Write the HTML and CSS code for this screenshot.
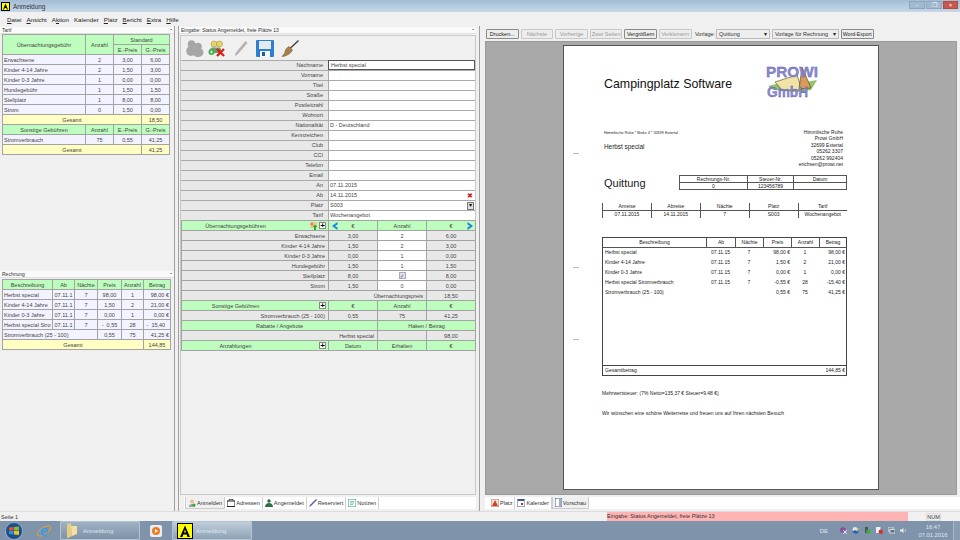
FILE: index.html
```html
<!DOCTYPE html>
<html lang="de">
<head>
<meta charset="UTF-8">
<title>Anmeldung</title>
<link rel="stylesheet" href="styles.css">
</head>
<body>
<div class="window">
  <div class="titlebar">
    <svg class="app-icon" width="9" height="9" viewBox="0 0 9 9"><rect width="9" height="9" fill="#000"/><rect x="1" y="1" width="7" height="7" fill="#ff0"/><path d="M2 7.500 4.500 1.500 7 7.500H5.800L5.300 6H3.700L3.200 7.500Z" fill="#000"/></svg>
    <span class="title-text">Anmeldung</span>
    <div class="win-btns">
      <span class="win-btn">–</span><span class="win-btn">❐</span><span class="win-btn close">×</span>
    </div>
  </div>
  <div class="menubar">
    <span><u>D</u>atei</span><span><u>A</u>nsicht</span><span>A<u>k</u>tion</span><span>Kalender</span><span><u>P</u>latz</span><span><u>B</u>ericht</span><span><u>E</u>xtra</span><span><u>H</u>ilfe</span>
  </div>

  <div class="main">
    <!-- links: Tarif und Rechnung -->
    <div class="col-left">
      <div class="pane-head">Tarif<span class="pin">▪</span></div>
      <table class="grid tarif">
        <colgroup><col class="c1"><col class="c2"><col class="c3"><col class="c4"></colgroup>
        <tr class="head"><td rowspan="2">Übernachtungsgebühr</td><td rowspan="2">Anzahl</td><td colspan="2">Standard</td></tr>
        <tr class="head"><td>E.-Preis</td><td>G.-Preis</td></tr>
        <tr class="row"><td class="l">Erwachsene</td><td>2</td><td>3,00</td><td>6,00</td></tr>
        <tr class="row"><td class="l">Kinder 4-14 Jahre</td><td>2</td><td>1,50</td><td>3,00</td></tr>
        <tr class="row"><td class="l">Kinder 0-3 Jahre</td><td>1</td><td>0,00</td><td>0,00</td></tr>
        <tr class="row"><td class="l">Hundegebühr</td><td>1</td><td>1,50</td><td>1,50</td></tr>
        <tr class="row"><td class="l">Stellplatz</td><td>1</td><td>8,00</td><td>8,00</td></tr>
        <tr class="row"><td class="l">Strom</td><td>0</td><td>1,50</td><td>0,00</td></tr>
        <tr class="sum"><td colspan="3">Gesamt</td><td>18,50</td></tr>
        <tr class="head"><td>Sonstige Gebühren</td><td>Anzahl</td><td>E.-Preis</td><td>G.-Preis</td></tr>
        <tr class="row"><td class="l">Stromverbrauch</td><td>75</td><td>0,55</td><td>41,25</td></tr>
        <tr class="sum"><td colspan="3">Gesamt</td><td>41,25</td></tr>
      </table>
      <div class="pane-head second">Rechnung<span class="pin">▪</span></div>
      <table class="grid rechnung">
        <colgroup><col class="r1"><col class="r2"><col class="r3"><col class="r4"><col class="r5"><col class="r6"></colgroup>
        <tr class="head"><td>Beschreibung</td><td>Ab</td><td>Nächte</td><td>Preis</td><td>Anzahl</td><td>Betrag</td></tr>
        <tr class="row"><td class="l">Herbst special</td><td>07.11.1</td><td>7</td><td>98,00</td><td>1</td><td class="r">98,00 €</td></tr>
        <tr class="row"><td class="l">Kinder 4-14 Jahre</td><td>07.11.1</td><td>7</td><td>1,50</td><td>2</td><td class="r">21,00 €</td></tr>
        <tr class="row"><td class="l">Kinder 0-3 Jahre</td><td>07.11.1</td><td>7</td><td>0,00</td><td>1</td><td class="r">0,00 €</td></tr>
        <tr class="row"><td class="l">Herbst special Stro</td><td>07.11.1</td><td>7</td><td>-&nbsp;&nbsp;0,55</td><td>28</td><td class="l">&nbsp;-&nbsp;&nbsp;15,40</td></tr>
        <tr class="row"><td class="l" colspan="3">Stromverbrauch (25 - 100)</td><td>0,55</td><td>75</td><td class="r">41,25 €</td></tr>
        <tr class="sum"><td colspan="5">Gesamt</td><td>144,85</td></tr>
      </table>
    </div>

    <!-- Mitte: Eingabe -->
    <div class="col-mid">
      <div class="pane-head">Eingabe: Status Angemeldet, freie Plätze 13<span class="pin">▪</span></div>
      <div class="mid-body">
        <div class="toolbar">
          <svg width="18" height="17" viewBox="0 0 18 17"><g fill="#a6a6a6"><circle cx="5.500" cy="4" r="3.800"/><circle cx="12" cy="6.500" r="3.800"/><ellipse cx="5" cy="11" rx="4.800" ry="5"/><ellipse cx="12" cy="12.500" rx="5.500" ry="4.500"/></g></svg>
          <svg width="18" height="17" viewBox="0 0 18 17"><circle cx="6" cy="4" r="3" fill="#e6d36a" stroke="#9a8a30" stroke-width=".5"/><circle cx="11.500" cy="4" r="3" fill="#e6d36a" stroke="#9a8a30" stroke-width=".5"/><path d="M1 13c0-3.500 2-5.500 4-5.500h6c1.500 0 2 1 2 2.500v3z" fill="#6f9a72"/><circle cx="3.500" cy="12" r="3" fill="#3fb04a"/><path d="M2 12h3M3.500 10.500v3" stroke="#fff" stroke-width=".8"/><path d="M9 9l7 7M16 9l-7 7" stroke="#d9201a" stroke-width="2.400"/></svg>
          <svg width="14" height="17" viewBox="0 0 14 17"><path d="M11.500 1 13.500 3 3.500 14.500 1 16l.6-3z" fill="#b2b2b2"/></svg>
          <svg width="18" height="17" viewBox="0 0 18 17"><rect width="18" height="17" rx="1" fill="#2e7fd0"/><rect x="3" y="1" width="12" height="8" fill="#e3eaf2"/><rect x="4" y="11" width="10" height="6" fill="#f4f6f8"/><rect x="6" y="12" width="3" height="4" fill="#1f5c9c"/></svg>
          <svg width="18" height="17" viewBox="0 0 18 17"><path d="M17.500 .5 9 8.500" stroke="#3a3a3a" stroke-width="1.200"/><path d="M8 6.500 11.500 10C10 13.500 5 16.500 1 16.500c2-2 3-3.500 3-5C4.500 9.500 6 7.500 8 6.500z" fill="#a8824a" stroke="#5f4620" stroke-width=".5"/></svg>
        </div>
        <div class="form">
          <div class="f-label">Nachname</div><div class="f-val focus">Herbst special</div>
          <div class="f-label">Vorname</div><div class="f-val"></div>
          <div class="f-label">Titel</div><div class="f-val"></div>
          <div class="f-label">Straße</div><div class="f-val"></div>
          <div class="f-label">Postleitzahl</div><div class="f-val"></div>
          <div class="f-label">Wohnort</div><div class="f-val"></div>
          <div class="f-label">Nationalität</div><div class="f-val">D - Deutschland</div>
          <div class="f-label">Kennzeichen</div><div class="f-val"></div>
          <div class="f-label">Club</div><div class="f-val"></div>
          <div class="f-label">CCI</div><div class="f-val"></div>
          <div class="f-label">Telefon</div><div class="f-val"></div>
          <div class="f-label">Email</div><div class="f-val"></div>
          <div class="f-label">An</div><div class="f-val">07.11.2015</div>
          <div class="f-label">Ab</div><div class="f-val">14.11.2015<span class="x-mark">✖</span></div>
          <div class="f-label">Platz</div><div class="f-val">S003<span class="drop">▾</span></div>
          <div class="f-label">Tarif</div><div class="f-val">Wochenangebot</div>
        </div>
        <table class="grid prices">
          <colgroup><col class="p1"><col class="p2"><col class="p3"><col class="p4"></colgroup>
          <tr class="head"><td class="with-plus">Übernachtungsgebühren<span class="add-ico"><svg width="9" height="9" viewBox="0 0 9 9"><rect x="1" y="1" width="7" height="6" fill="#e9cf8c"/><circle cx="3" cy="3" r="1.500" fill="#e57a7a"/><path d="M5 9V6H3.500L6 3.500 8.500 6H7v3z" fill="#3aa63a"/></svg></span><span class="plus">+</span></td><td class="arrows"><svg class="arr" width="6" height="8" viewBox="0 0 6 8"><path d="M5.500 0 0 4l5.500 4V5.500L3 4l2.500-1.500z" fill="#1d7fe0"/></svg>€</td><td>Anzahl</td><td class="arrows">€<svg class="arr right" width="6" height="8" viewBox="0 0 6 8"><path d="M.5 0 6 4 .5 8V5.500L3 4 .5 2.500z" fill="#1d7fe0"/></svg></td></tr>
          <tr class="gray"><td class="rr">Erwachsene</td><td>3,00</td><td class="w">2</td><td>6,00</td></tr>
          <tr class="gray"><td class="rr">Kinder 4-14 Jahre</td><td>1,50</td><td class="w">2</td><td>3,00</td></tr>
          <tr class="gray"><td class="rr">Kinder 0-3 Jahre</td><td>0,00</td><td class="w">1</td><td>0,00</td></tr>
          <tr class="gray"><td class="rr">Hundegebühr</td><td>1,50</td><td class="w">1</td><td>1,50</td></tr>
          <tr class="gray"><td class="rr">Stellplatz</td><td>8,00</td><td class="w"><span class="check">✓</span></td><td>8,00</td></tr>
          <tr class="gray"><td class="rr">Strom</td><td>1,50</td><td class="w">0</td><td>0,00</td></tr>
          <tr class="gray"><td class="rr" colspan="3">Übernachtungspreis</td><td>18,50</td></tr>
          <tr class="head"><td class="with-plus">Sonstige Gebühren<span class="plus">+</span></td><td>€</td><td>Anzahl</td><td>€</td></tr>
          <tr class="gray"><td class="rr">Stromverbrauch (25 - 100)</td><td>0,55</td><td>75</td><td>41,25</td></tr>
          <tr class="head"><td colspan="2">Rabatte / Angebote</td><td colspan="2">Haken / Betrag</td></tr>
          <tr class="gray"><td class="rr" colspan="2">Herbst special</td><td></td><td>98,00</td></tr>
          <tr class="head"><td class="with-plus">Anzahlungen<span class="plus">+</span></td><td>Datum</td><td>Erhalten</td><td>€</td></tr>
        </table>
      </div>
      <div class="tabs mid-tabs">
        <span class="tab active"><svg width="8" height="8" viewBox="0 0 8 8"><circle cx="4" cy="2.500" r="2" fill="#e8c08a"/><path d="M1 8c0-2 1-3 3-3s3 1 3 3z" fill="#8aa0b8"/><circle cx="6" cy="6" r="1.600" fill="#3aa63a"/></svg>Anmelden</span>
        <span class="tab"><svg width="8" height="8" viewBox="0 0 8 8"><rect y="2" width="8" height="5.500" fill="none" stroke="#222"/><path d="M2 2V.5h4V2" fill="none" stroke="#222" stroke-width=".7"/></svg>Adressen</span>
        <span class="tab"><svg width="8" height="8" viewBox="0 0 8 8"><circle cx="4" cy="2" r="1.700" fill="#2f6b45"/><path d="M0 8c0-2.500 2-4 4-4s4 1.500 4 4z" fill="#2f6b45"/></svg>Angemeldet</span>
        <span class="tab"><svg width="8" height="8" viewBox="0 0 8 8"><path d="M7 0 8 1 2 7 0 8l1-2z" fill="#4a5fa8"/></svg>Reserviert</span>
        <span class="tab"><svg width="8" height="8" viewBox="0 0 8 8"><rect width="8" height="8" rx="1" fill="#fff" stroke="#2a9a8a"/><path d="M2 4h4M2 2.500h4M2 5.500h3" stroke="#2a9a8a" stroke-width=".6"/></svg>Notizen</span>
      </div>
    </div>

    <!-- rechts: Vorschau -->
    <div class="col-right">
      <div class="preview-bar">
        <button class="btn">Drucken...</button>
        <button class="btn off">Nächste</button>
        <button class="btn off">Vorherige</button>
        <button class="btn off">Zwei Seiten</button>
        <button class="btn">Vergrößern</button>
        <button class="btn off">Verkleinern</button>
        <span class="bar-label">Vorlage:</span>
        <span class="combo c-a">Quittung<i>▾</i></span>
        <span class="combo c-b">Vorlage für Rechnung<i>▾</i></span>
        <button class="btn export">Word-Export</button>
      </div>
      <div class="preview">
        <div class="page">
          <i class="fold f1"></i><i class="fold f2"></i><i class="fold f3"></i>
          <div class="doc-top">
            <div class="doc-title">Campingplatz Software</div>
            <svg class="logo" width="54" height="42" viewBox="0 0 54 42">
              <path d="M2 24 14 21H36L51 18 45 28 30 30 8 28z" fill="#8fc46a"/>
              <path d="M9 20 31 13 36 28 16 28z" fill="#efe3a8" stroke="#4a3a20" stroke-width=".6"/>
              <path d="M33 27 36 5 45 26z" fill="#d99a5c" stroke="#4a3a20" stroke-width=".6"/>
              <text x="0" y="15" class="logo-text" textLength="52" lengthAdjust="spacingAndGlyphs">PROWI</text>
              <text x="1" y="35" class="logo-text" textLength="41" lengthAdjust="spacingAndGlyphs">GmbH</text>
            </svg>
          </div>
          <div class="doc-addr">
            <div>
              <div class="sender">Himmlische Ruhe * Binks 4 * 32699 Extertal</div>
              <div class="recipient">Herbst special</div>
            </div>
            <div class="own-addr">Himmlische Ruhe<br>Prowi GmbH<br>32699 Extertal<br>05262 3307<br>05262 992404<br>erichsen@prowi.net</div>
          </div>
          <div class="doc-head">
            <div class="doc-name">Quittung</div>
            <table class="doc-meta">
              <tr><td>Rechnungs-Nr.</td><td>Steuer-Nr.</td><td>Datum</td></tr>
              <tr><td>0</td><td>123456789</td><td></td></tr>
            </table>
          </div>
          <table class="doc-stay">
            <tr><td>Anreise</td><td>Abreise</td><td>Nächte</td><td>Platz</td><td>Tarif</td></tr>
            <tr><td>07.11.2015</td><td>14.11.2015</td><td>7</td><td>S003</td><td>Wochenangebot</td></tr>
          </table>
          <div class="doc-items">
            <div class="it-row it-head"><span class="i1">Beschreibung</span><span class="i2">Ab</span><span class="i3">Nächte</span><span class="i4">Preis</span><span class="i5">Anzahl</span><span class="i6">Betrag</span></div>
            <div class="it-body">
              <div class="it-row"><span class="i1 tl">Herbst special</span><span class="i2">07.11.15</span><span class="i3">7</span><span class="i4 tr">98,00 €</span><span class="i5">1</span><span class="i6 tr">98,00 €</span></div>
              <div class="it-row"><span class="i1 tl">Kinder 4-14 Jahre</span><span class="i2">07.11.15</span><span class="i3">7</span><span class="i4 tr">1,50 €</span><span class="i5">2</span><span class="i6 tr">21,00 €</span></div>
              <div class="it-row"><span class="i1 tl">Kinder 0-3 Jahre</span><span class="i2">07.11.15</span><span class="i3">7</span><span class="i4 tr">0,00 €</span><span class="i5">1</span><span class="i6 tr">0,00 €</span></div>
              <div class="it-row"><span class="i1 tl">Herbst special Stromverbrauch</span><span class="i2">07.11.15</span><span class="i3">7</span><span class="i4 tr">-0,55 €</span><span class="i5">28</span><span class="i6 tr">-15,40 €</span></div>
              <div class="it-row"><span class="i1 tl">Stromverbrauch (25 - 100)</span><span class="i2"></span><span class="i3"></span><span class="i4 tr">0,55 €</span><span class="i5">75</span><span class="i6 tr">41,25 €</span></div>
            </div>
            <div class="it-total"><span>Gesamtbetrag</span><span>144,85 €</span></div>
          </div>
          <div class="doc-note">Mehrwertsteuer: (7% Netto=135,37 € Steuer=9,48 €)</div>
          <div class="doc-note">Wir wünschen eine schöne Weiterreise und freuen uns auf Ihren nächsten Besuch</div>
        </div>
      </div>
      <div class="tabs right-tabs">
        <span class="tab"><svg width="8" height="8" viewBox="0 0 8 8"><rect width="8" height="8" fill="#f4e4dc" stroke="#b03020" stroke-width=".6"/><path d="M1 7 4 1l3 6z" fill="#d04020"/></svg>Platz</span>
        <span class="tab"><svg width="8" height="8" viewBox="0 0 8 8"><rect width="8" height="8" fill="#fff" stroke="#3a5a8a"/><rect x="1" y="0" width="6" height="2" fill="#3a5a8a"/><rect x="4" y="4" width="2" height="2" fill="#d02020"/></svg>Kalender</span>
        <span class="tab active"><svg width="7" height="9" viewBox="0 0 7 9"><rect width="7" height="9" fill="#fff" stroke="#3a5a8a"/><path d="M5 1v7" stroke="#3a5a8a"/></svg>Vorschau</span>
      </div>
    </div>
  </div>

  <div class="statusbar">
    <span class="st-page">Seite 1</span>
    <span class="st-msg">Eingabe: Status Angemeldet, freie Plätze 13</span>
    <span class="st-num">NUM</span>
  </div>
</div>

<div class="taskbar">
  <span class="start"><svg width="18" height="18" viewBox="0 0 18 18"><circle cx="9" cy="9" r="8.500" fill="#1d4f8c" stroke="#b9cfe4" stroke-width=".6"/><path d="M4 5.500 8.500 5V8.500H4z" fill="#e8522a"/><path d="M9 5 14 4.500V8.500H9z" fill="#7cc03a"/><path d="M4 9H8.500V12.500L4 12z" fill="#2f8fe0"/><path d="M9 9h5v4l-5-.5z" fill="#f4c21c"/></svg></span>
  <span class="tb-ico ie"><svg width="16" height="16" viewBox="0 0 16 16"><ellipse cx="8" cy="8" rx="7.500" ry="3.500" transform="rotate(-35 8 8)" fill="none" stroke="#e0a32a" stroke-width="1"/><text x="8" y="12.500" class="ie-e">e</text></svg></span>
  <span class="task folder"><svg width="12" height="15" viewBox="0 0 12 15"><path d="M1 1 5 0 6 13 2 15H1z" fill="#e8cd80"/><path d="M5 3h6v8l-5 2z" fill="#f2e0a2"/></svg>Anmeldung</span>
  <span class="tb-ico media"><svg width="12" height="12" viewBox="0 0 12 12"><rect width="12" height="12" rx="2" fill="#e9eef4"/><circle cx="6" cy="6" r="4" fill="#ee7b1e"/><path d="M5 4l3 2-3 2z" fill="#fff"/></svg></span>
  <span class="task app"><svg width="16" height="16" viewBox="0 0 16 16"><rect width="16" height="16" fill="#000"/><rect x="1" y="1" width="14" height="14" fill="#ff0"/><path d="M3 14 8 2.500 13 14H10.500L9.700 11.500H6.300L5.500 14zM7 9.500h2L8 6.500z" fill="#000" fill-rule="evenodd"/></svg>Anmeldung</span>
  <span class="tray">
    <span class="lang">DE</span>
    <svg width="7" height="7" viewBox="0 0 7 7"><circle cx="3" cy="3" r="2.800" fill="#8a4aa0"/><path d="M3 3l4 4M7 3 3 7" stroke="#e8e8f4" stroke-width="1"/></svg>
    <svg width="7" height="7" viewBox="0 0 7 7"><circle cx="3" cy="2.500" r="2.400" fill="#dfe6ee"/><path d="M0 5l3-2 4 2-3 2z" fill="#2f5fb0"/><circle cx="5.500" cy="2" r="1" fill="#e8c830"/></svg>
    <svg width="7" height="7" viewBox="0 0 7 7"><rect x="1" y="0" width="3" height="6" fill="#4a525c"/><circle cx="4.500" cy="4.500" r="2.300" fill="#3cae3c"/></svg>
    <svg width="7" height="7" viewBox="0 0 7 7"><rect width="4.500" height="6" fill="#eef1f4"/><circle cx="4.800" cy="4.800" r="2.200" fill="#d63030"/></svg>
    <svg width="7" height="7" viewBox="0 0 7 7"><rect width="5" height="4" fill="none" stroke="#e6ebf0" stroke-width=".8"/><rect x="2" y="2.500" width="5" height="3.500" fill="#5c6f84" stroke="#e6ebf0" stroke-width=".8"/></svg>
    <svg width="7" height="7" viewBox="0 0 7 7"><path d="M0 2.500h1.500L3.500 1v5L1.500 4.500H0z" fill="#e6ebf0"/><path d="M5 2c.6 1 .6 2 0 3" fill="none" stroke="#e6ebf0" stroke-width=".6"/></svg>
    <span class="clock">16:47<br>07.01.2016</span>
    <b class="show-desk"></b>
  </span>
</div>
</body>
</html>
```

FILE: styles.css
```css
* {
    box-sizing: border-box;
}

html, body {
    margin: 0;
    padding: 0;
    width: 960px;
    height: 540px;
    overflow: hidden;
}

body {
    font-family: "Liberation Sans", Arial, sans-serif;
    font-size: 5.5px;
    color: #333;
    background-color: #f0f0f0;
}

.window {
    height: 521px;
    display: flex;
    flex-direction: column;
}

/* Titelleiste */
.titlebar {
    height: 12px;
    flex: none;
    display: flex;
    align-items: center;
    padding-left: 1px;
    background: linear-gradient(#a3bcd4, #c6d8e9);
    color: #333;
    font-size: 6.4px;
}

.app-icon {
    margin-right: 3px;
}

.win-btns {
    margin-left: auto;
    margin-right: 2px;
    margin-bottom: 3px;
    display: flex;
    gap: 1px;
}

.win-btn {
    width: 16px;
    height: 8px;
    line-height: 7px;
    text-align: center;
    background-color: #a2b9cf;
    color: #eef;
    font-size: 6px;
    border: 1px solid #8ea6bc;
    overflow: hidden;
}

.win-btn.close {
    width: 15px;
    background-color: #c9554c;
    border-color: #b04a44;
    color: #fff;
}

.menubar {
    height: 14px;
    flex: none;
    display: flex;
    align-items: center;
    gap: 5px;
    padding-left: 7px;
    background-color: #f0f0f0;
    font-size: 6.2px;
    color: #222;
}

/* Drei Spalten */
.main {
    flex: 1;
    min-height: 0;
    display: flex;
    background-color: #f0f0f0;
}

.col-left {
    width: 175px;
    flex: none;
    padding-top: 1px;
    border-right: 1px solid #a0a0a0;
}

.col-mid {
    width: 302px;
    flex: none;
    margin-left: 3px;
    padding-top: 1px;
    padding-bottom: 2px;
    padding-right: 3px;
    border-left: 1px solid #a0a0a0;
    border-right: 1px solid #a0a0a0;
    display: flex;
    flex-direction: column;
}

.col-right {
    width: 476px;
    flex: none;
    margin-left: 4px;
    display: flex;
    flex-direction: column;
    padding-left: 1px;
    padding-top: 3px;
    padding-bottom: 2px;
}

.pane-head {
    height: 7px;
    line-height: 6px;
    padding: 0 2px;
    background-color: #fafafa;
    border-bottom: 1px solid #e0e0e0;
    font-size: 5px;
    display: flex;
    justify-content: space-between;
}

.pin {
    font-size: 4px;
}

.pane-head.second {
    margin-top: 116px;
    margin-bottom: 1px;
}

/* Tabellen */
.grid {
    border-collapse: collapse;
    table-layout: fixed;
    margin-left: 2px;
    background-color: #f0f0f0;
}

.grid td {
    border: 1px solid #a3a3a3;
    height: 10px;
    padding: 0 1px;
    text-align: center;
    overflow: hidden;
    white-space: nowrap;
    font-size: 5.5px;
    color: #444;
}

.tarif { width: 167px; }
.c1 { width: 83px; }
.c2 { width: 28px; }
.c3 { width: 28px; }
.c4 { width: 28px; }

.rechnung { width: 168px; }
.r1 { width: 50px; }
.r2 { width: 22px; }
.r3 { width: 23px; }
.r4 { width: 24px; }
.r5 { width: 22px; }
.r6 { width: 27px; }

.head td {
    background-color: #bdfdbd;
}

.row td {
    background-color: #f3f3ff;
}

.grid .l {
    text-align: left;
}

.grid .r {
    text-align: right;
}

.sum td {
    background-color: #ffffc4;
}

.mid-body {
    flex: 1;
    min-height: 0;
    margin-top: 1px;
    margin-left: 1px;
    border: 1px solid #c8c8c8;
    display: flex;
    flex-direction: column;
}

.toolbar {
    height: 24px;
    flex: none;
    display: flex;
    align-items: center;
    gap: 8px;
    padding-left: 5px;
}

.toolbar svg:nth-child(2) {
    margin-left: -4px;
}

.toolbar svg:nth-child(5) {
    margin-left: -1px;
}

.form {
    display: grid;
    grid-template-columns: 147px 147px;
    grid-auto-rows: 10px;
}

.f-label {
    background-color: #e8e8e8;
    border-top: 1px solid #aaa;
    text-align: right;
    line-height: 9px;
    padding-right: 5px;
    color: #444;
}

.f-val {
    position: relative;
    background-color: #fff;
    border: 1px solid #aaa;
    border-width: 1px 0 0 1px;
    line-height: 9px;
    padding-left: 1px;
    color: #444;
}

.f-val.focus {
    border: 1px solid #555;
    padding-left: 2px;
    line-height: 8px;
}

.x-mark {
    position: absolute;
    right: 2px;
    top: 0;
    color: #d01818;
    font-size: 7px;
    line-height: 9px;
}

.drop {
    position: absolute;
    right: 1px;
    top: 1px;
    width: 7px;
    height: 8px;
    background-color: #e0e0e0;
    border: 1px solid #777;
    line-height: 5px;
    text-align: center;
    color: #000;
}

.prices {
    width: 294px;
    margin-left: 0;
}

.p1 { width: 147px; }
.p2 { width: 49px; }
.p3 { width: 49px; }
.p4 { width: 49px; }

.prices td {
    background-color: #e8e8e8;
}

.prices .head td {
    background-color: #bdfdbd;
}

.prices td.rr {
    text-align: right;
    padding-right: 3px;
}

.prices td.w {
    background-color: #fff;
}

.prices td.with-plus {
    position: relative;
    padding-right: 40px;
}

.plus {
    position: absolute;
    right: 2px;
    top: 1px;
    width: 7px;
    height: 7px;
    line-height: 6px;
    background-color: #fff;
    border: 1px solid #888;
    color: #000;
    font-size: 8px;
    font-weight: bold;
    text-align: center;
}

.add-ico {
    position: absolute;
    right: 10px;
    top: 0;
}

.arrows {
    position: relative;
}

.arr {
    position: absolute;
    left: 3px;
    top: 1px;
}

.arr.right {
    left: auto;
    right: 2px;
}

.check {
    display: inline-block;
    width: 7px;
    height: 7px;
    line-height: 6px;
    background-color: #dde2f0;
    border: 1px solid #aab;
    color: #335;
    font-size: 5px;
}

/* Reiter */
.tabs {
    display: flex;
    align-items: center;
    height: 12px;
    flex: none;
    margin-top: 2px;
    font-size: 5.6px;
    color: #333;
    background-color: #fff;
}

.mid-tabs {
    margin-left: 5px;
    padding-left: 1px;
}

.right-tabs {
    padding-left: 4px;
}

.tab {
    display: flex;
    align-items: center;
    gap: 1px;
    height: 12px;
    padding: 0 2px;
    border-right: 1px solid #d0d0d0;
}

.tab.active {
    background-color: #f0f0f0;
    border: 1px solid #ccc;
    border-top: 0;
}

/* Vorschau */
.preview-bar {
    height: 10px;
    flex: none;
    display: flex;
    align-items: center;
    gap: 2px;
    padding-left: 1px;
    margin-bottom: 2px;
}

.btn {
    font-family: inherit;
    font-size: 5.5px;
    height: 10px;
    padding: 0;
    width: 32.6px;
    flex: none;
    white-space: nowrap;
    background-color: #ededed;
    border: 1px solid #8a8a8a;
    border-radius: 1px;
    color: #222;
    line-height: 7px;
}

.btn.off {
    color: #999;
    border-color: #c8c8c8;
}

.btn.export {
    font-size: 5.2px;
}

.bar-label {
    margin-left: 1.4px;
    width: 19px;
    flex: none;
}

.combo {
    position: relative;
    flex: none;
    height: 10px;
    line-height: 8px;
    padding-left: 2px;
    background-color: #ededed;
    border: 1px solid #bbb;
}

.combo i {
    position: absolute;
    right: 2px;
    top: 0;
    font-style: normal;
    color: #222;
}

.c-a { width: 54px; }
.c-b { width: 67px; }

.preview {
    flex: 1;
    min-height: 0;
    background-color: #a9a9a9;
    padding: 3px 0 0 77px;
    margin-right: 3px;
    overflow: hidden;
    border: 1px solid #9a9a9a;
}

/* Die Seite im Dokument */
.page {
    position: relative;
    width: 316px;
    height: 445px;
    background-color: #fff;
    border: 1px solid #555;
    color: #222;
    padding: 0 31px 0 40px;
    font-size: 5px;
}

.fold {
    position: absolute;
    left: 9px;
    width: 6px;
    height: 1px;
    background-color: #bbb;
}

.f1 { top: 107px; }
.f2 { top: 221px; }
.f3 { top: 293px; }

.doc-top {
    display: flex;
    align-items: flex-start;
    padding-top: 16px;
    height: 83px;
}

.doc-title {
    font-size: 12.4px;
    line-height: 44px;
    color: #111;
    width: 162px;
    flex: none;
}

.logo-text {
    font-family: "Liberation Sans", Arial, sans-serif;
    font-size: 14px;
    font-weight: bold;
    fill: #8a8ad2;
    stroke: #5c5ca0;
    stroke-width: .3;
}

.doc-addr {
    display: flex;
    justify-content: space-between;
    width: 239px;
}

.sender {
    font-size: 3.8px;
    margin-top: 2px;
}

.recipient {
    font-size: 6.4px;
    margin-top: 8px;
}

.own-addr {
    text-align: right;
    font-size: 5px;
    line-height: 6.4px;
}

.doc-head {
    display: flex;
    align-items: center;
    margin-top: 8px;
    width: 243px;
}

.doc-name {
    font-size: 11px;
    width: 75px;
    flex: none;
}

.doc-meta {
    width: 168px;
    border-collapse: collapse;
    table-layout: fixed;
    text-align: center;
}

.doc-meta td {
    border: 1px solid #555;
    height: 7px;
    padding: 0;
    line-height: 5px;
}

.doc-meta td:nth-child(1) { width: 68px; }
.doc-meta td:nth-child(2) { width: 46px; }

.doc-stay {
    width: 245px;
    margin-top: 13px;
    margin-left: -2px;
    border-collapse: collapse;
    table-layout: fixed;
    text-align: center;
}

.doc-stay td {
    border-left: 1px solid #555;
    height: 7.5px;
    padding: 0;
    line-height: 5px;
}

.doc-stay tr:first-child td {
    border-bottom: 1px solid #555;
}

.doc-items {
    width: 245px;
    height: 139px;
    margin-top: 19px;
    margin-left: -2px;
    border: 1px solid #444;
    display: flex;
    flex-direction: column;
}

.it-row {
    display: grid;
    grid-template-columns: 103px 29px 28px 28px 28px 1fr;
    height: 10px;
    line-height: 8px;
    text-align: center;
}

.it-head {
    border-bottom: 1px solid #555;
}

.it-head span + span {
    border-left: 1px solid #555;
}

.it-body {
    flex: 1;
}

.tl {
    text-align: left;
    padding-left: 2px;
}

.tr {
    text-align: right;
    padding-right: 1px;
}

.it-total {
    display: flex;
    justify-content: space-between;
    height: 10px;
    line-height: 9px;
    padding: 0 1px 0 2px;
    border-top: 1px solid #444;
}

.doc-note {
    margin-top: 14px;
    margin-left: -2px;
}

/* Statuszeile */
.statusbar {
    height: 10px;
    flex: none;
    display: flex;
    align-items: center;
    border-top: 1px solid #ddd;
    font-size: 5.5px;
    padding-left: 1px;
}

.st-page {
    width: 606px;
}

.st-msg {
    width: 301px;
    height: 9px;
    line-height: 8px;
    background-color: #ffb4b4;
}

.st-num {
    margin-left: 18px;
    width: 15px;
    text-align: center;
    border: 1px solid #ddd;
    height: 8px;
    line-height: 6px;
}

/* Windows-Taskleiste */
.taskbar {
    height: 19px;
    display: flex;
    align-items: center;
    background-color: #7f94ab;
    color: #dfe7ef;
    font-size: 6px;
}

.start {
    width: 27px;
    display: flex;
    justify-content: center;
}

.tb-ico {
    display: flex;
    justify-content: center;
}

.ie {
    width: 33px;
}

.ie-e {
    font-family: "Liberation Sans", Arial, sans-serif;
    font-size: 15px;
    font-weight: bold;
    fill: #3f9ae0;
    text-anchor: middle;
}

.media {
    width: 32px;
}

.task {
    width: 80px;
    height: 19px;
    display: flex;
    align-items: center;
    background: linear-gradient(#9fb1c3, #7d92a9);
    border: 1px solid #b5c4d3;
    border-radius: 1px;
}

.task.folder {
    padding-left: 5px;
    gap: 5px;
}

.task.app {
    background: linear-gradient(#c0cedb, #8ea2b6);
    padding-left: 4px;
    gap: 3px;
}

.tray {
    margin-left: auto;
    height: 19px;
    display: flex;
    align-items: center;
    gap: 5px;
}

.lang {
    margin-right: 7px;
}

.clock {
    text-align: center;
    line-height: 8px;
    font-size: 5.8px;
    width: 32px;
    margin-left: 5px;
}

.show-desk {
    width: 7px;
    height: 19px;
    margin-left: -1px;
    border-left: 1px solid #a9b8c7;
    background-color: #8a9db2;
}
```
